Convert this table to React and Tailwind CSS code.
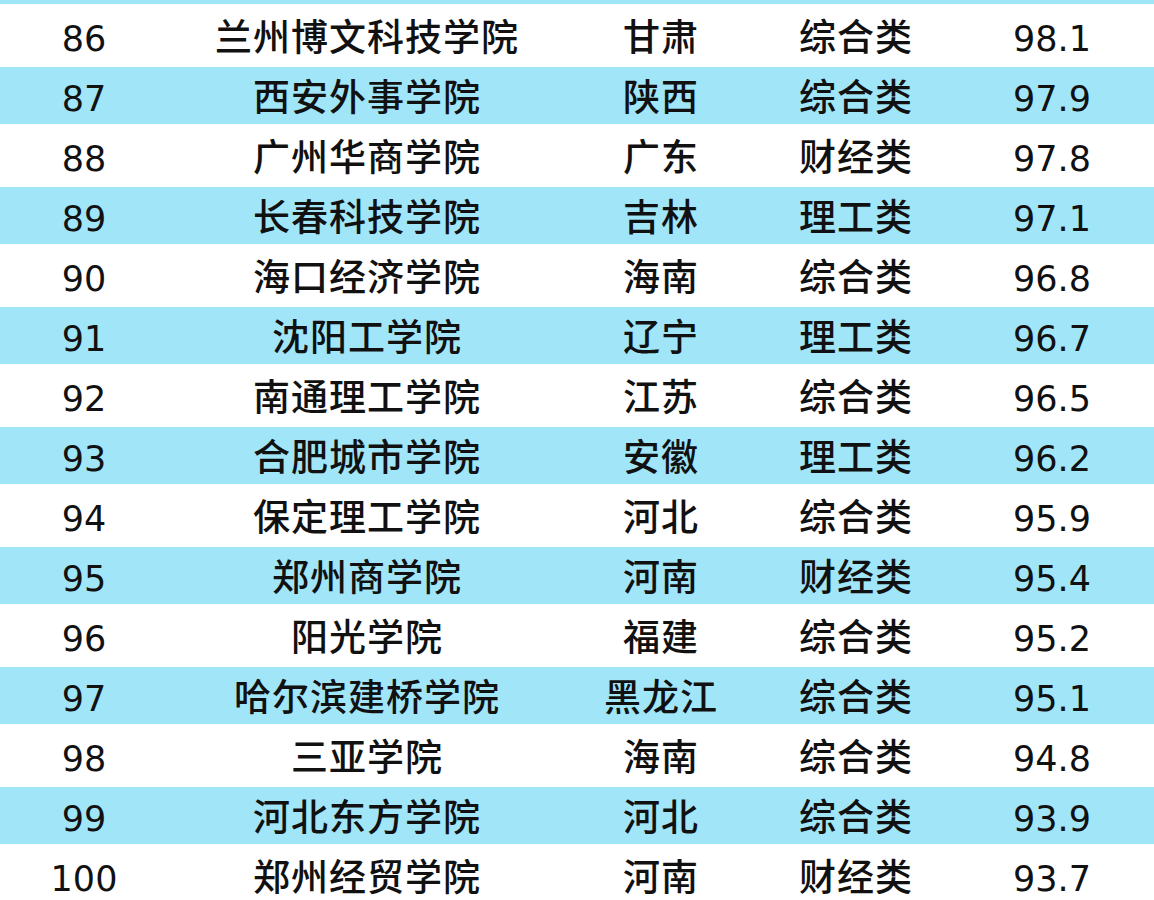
const rows = [
  ["86", "兰州博文科技学院", "甘肃", "综合类", "98.1"],
  ["87", "西安外事学院", "陕西", "综合类", "97.9"],
  ["88", "广州华商学院", "广东", "财经类", "97.8"],
  ["89", "长春科技学院", "吉林", "理工类", "97.1"],
  ["90", "海口经济学院", "海南", "综合类", "96.8"],
  ["91", "沈阳工学院", "辽宁", "理工类", "96.7"],
  ["92", "南通理工学院", "江苏", "综合类", "96.5"],
  ["93", "合肥城市学院", "安徽", "理工类", "96.2"],
  ["94", "保定理工学院", "河北", "综合类", "95.9"],
  ["95", "郑州商学院", "河南", "财经类", "95.4"],
  ["96", "阳光学院", "福建", "综合类", "95.2"],
  ["97", "哈尔滨建桥学院", "黑龙江", "综合类", "95.1"],
  ["98", "三亚学院", "海南", "综合类", "94.8"],
  ["99", "河北东方学院", "河北", "综合类", "93.9"],
  ["100", "郑州经贸学院", "河南", "财经类", "93.7"],
]

function NumCell({ children }) {
  return (
    <div className="text-center text-[35px] leading-none pt-[7px] font-['DejaVu_Sans',Verdana,sans-serif]">
      {children}
    </div>
  )
}

function TextCell({ children }) {
  return (
    <div className="text-center text-[37px] leading-none tracking-[1px] font-medium font-['Noto_Sans_CJK_SC','Noto_Sans',sans-serif]">
      {children}
    </div>
  )
}

export default function App() {
  return (
    <div className="w-[1154px] h-[900px] overflow-hidden bg-white text-[#111]">
      <div className="h-[4px] bg-[#a0e6f8]"></div>
      {rows.map((r, i) => (
        <div
          key={r[0]}
          className={`grid grid-cols-[168px_398px_190px_200px_192px] items-center ${
            i % 2 === 0 ? "h-[63px] bg-white" : "h-[57px] bg-[#a0e6f8]"
          }`}
        >
          <NumCell>{r[0]}</NumCell>
          <TextCell>{r[1]}</TextCell>
          <TextCell>{r[2]}</TextCell>
          <TextCell>{r[3]}</TextCell>
          <NumCell>{r[4]}</NumCell>
        </div>
      ))}
    </div>
  )
}
